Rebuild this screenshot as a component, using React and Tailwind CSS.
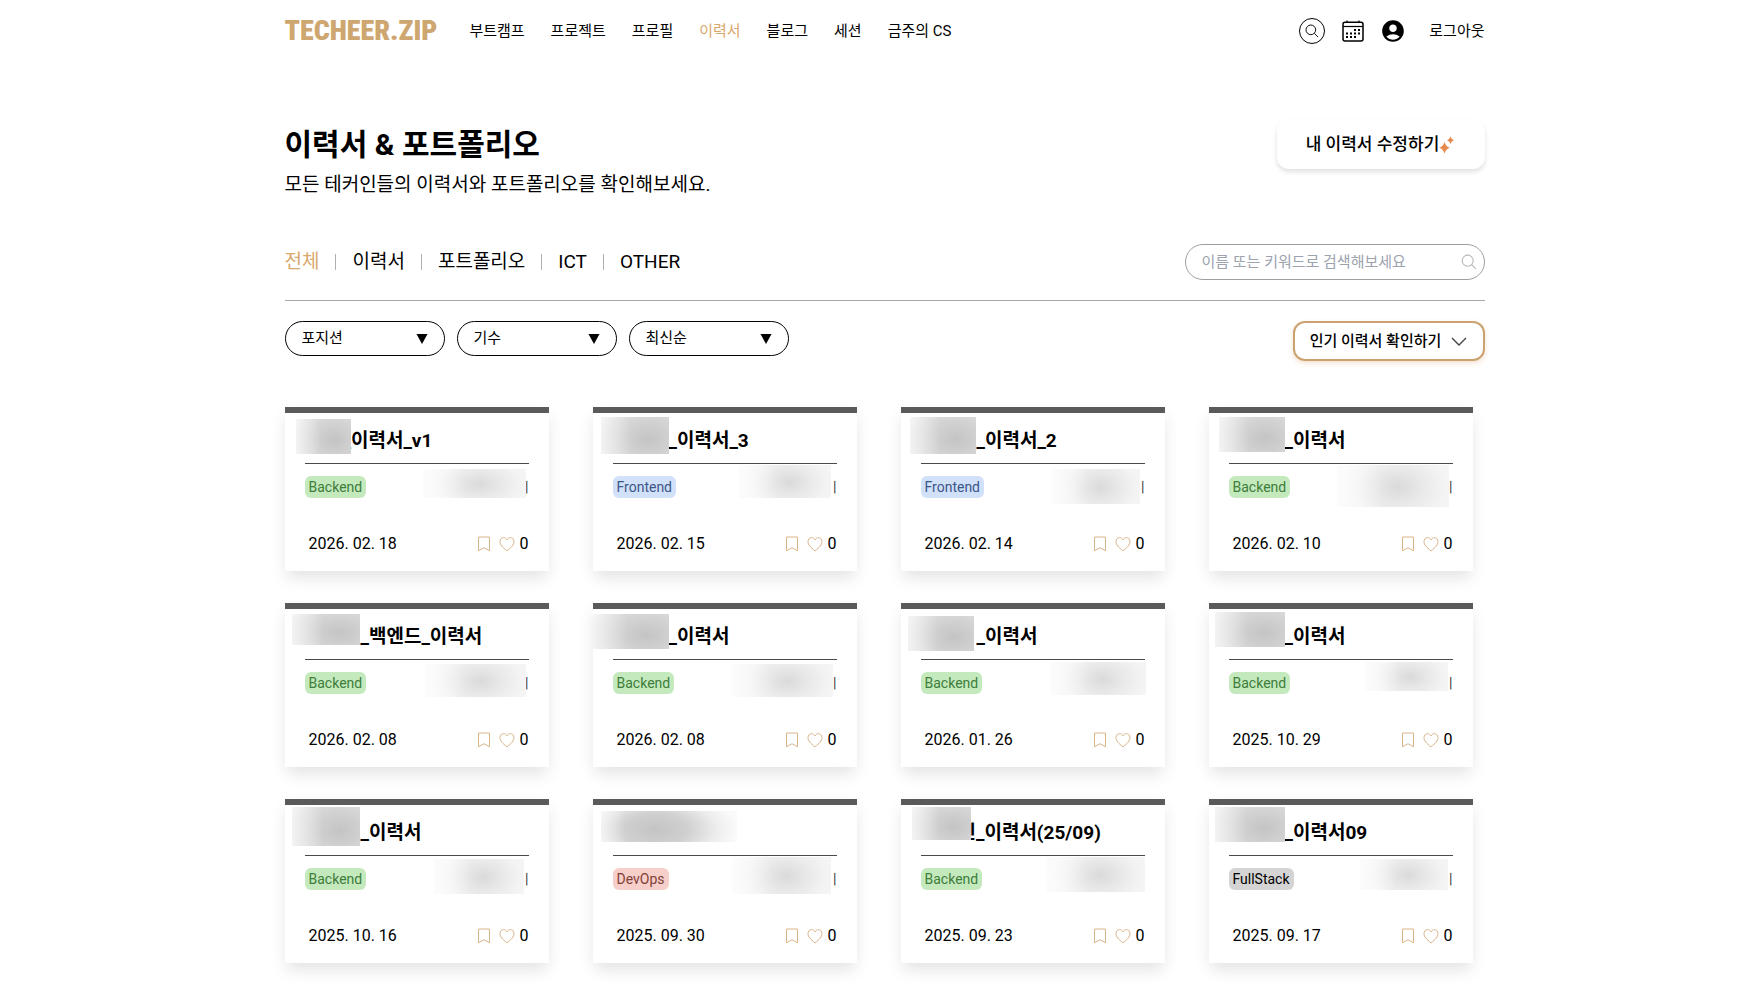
import React, { useState } from 'react';
import { MdAccountCircle } from 'react-icons/md';

const NAV = ['부트캠프', '프로젝트', '프로필', '이력서', '블로그', '세션', '금주의 CS'];
const TABS = ['전체', '이력서', '포트폴리오', 'ICT', 'OTHER'];

const FILTERS = [
    { id: 'position', label: '포지션', options: ['Backend', 'Frontend', 'DevOps', 'FullStack'] },
    { id: 'year', label: '기수', options: ['1기', '2기', '3기'] },
    { id: 'sort', label: '최신순', options: ['조회순', '이름순'] },
];

const TAG_STYLES = {
    Backend: 'bg-[#c3e9bd] text-[#3e7d3a]',
    Frontend: 'bg-[#d0e1f9] text-[#3d5588]',
    DevOps: 'bg-[#f6cfcb] text-[#823f36]',
    FullStack: 'bg-[#d4d4d4] text-black',
};

// titleMask / nameMask: blurred patches that hide personal names
const RESUMES = [
    { id: 1, title: '_이력서_v1', indent: 'pl-[38px]', tag: 'Backend', date: '2026. 02. 18', titleMask: 'left-[11px] top-[6px] w-[55px] h-[35px]', nameMask: 'left-[138px] top-[56px] w-[103px] h-[29px]', bar: true },
    { id: 2, title: '_이력서_3', indent: 'pl-14', tag: 'Frontend', date: '2026. 02. 15', titleMask: 'left-[8px] top-[4px] w-[68px] h-[37px]', nameMask: 'left-[146px] top-[52px] w-[92px] h-[33px]', bar: true },
    { id: 3, title: '_이력서_2', indent: 'pl-14', tag: 'Frontend', date: '2026. 02. 14', titleMask: 'left-[9px] top-[4px] w-[66px] h-[37px]', nameMask: 'left-[151px] top-[56px] w-[88px] h-[35px]', bar: true },
    { id: 4, title: '_이력서', indent: 'pl-14', tag: 'Backend', date: '2026. 02. 10', titleMask: 'left-[10px] top-[4px] w-[66px] h-[35px]', nameMask: 'left-[128px] top-[52px] w-[112px] h-[42px]', bar: true },
    { id: 5, title: '_백엔드_이력서', indent: 'pl-14', tag: 'Backend', date: '2026. 02. 08', titleMask: 'left-[7px] top-[5px] w-[68px] h-[31px]', nameMask: 'left-[140px] top-[55px] w-[101px] h-[33px]', bar: true },
    { id: 6, title: '_이력서', indent: 'pl-14', tag: 'Backend', date: '2026. 02. 08', titleMask: 'left-0 top-[5px] w-[76px] h-[35px]', nameMask: 'left-[139px] top-[55px] w-[101px] h-[33px]', bar: true },
    { id: 7, title: '_이력서', indent: 'pl-14', tag: 'Backend', date: '2026. 01. 26', titleMask: 'left-[7px] top-[7px] w-[66px] h-[35px]', nameMask: 'left-[149px] top-[53px] w-[96px] h-[33px]', bar: false },
    { id: 8, title: '_이력서', indent: 'pl-14', tag: 'Backend', date: '2025. 10. 29', titleMask: 'left-[6px] top-[3px] w-[70px] h-[35px]', nameMask: 'left-[156px] top-[53px] w-[83px] h-[29px]', bar: true },
    { id: 9, title: '_이력서', indent: 'pl-14', tag: 'Backend', date: '2025. 10. 16', titleMask: 'left-[7px] top-[2px] w-[68px] h-[39px]', nameMask: 'left-[149px] top-[54px] w-[90px] h-[35px]', bar: true },
    { id: 10, title: '', indent: 'pl-14', tag: 'DevOps', date: '2025. 09. 30', titleMask: 'left-[8px] top-[6px] w-[136px] h-[31px]', nameMask: 'left-[139px] top-[52px] w-[99px] h-[37px]', bar: true, fullMask: true },
    { id: 11, title: '인_이력서(25/09)', indent: 'pl-[38px]', tag: 'Backend', date: '2025. 09. 23', titleMask: 'left-[11px] top-[2px] w-[59px] h-[33px]', nameMask: 'left-[145px] top-[52px] w-[99px] h-[35px]', bar: false },
    { id: 12, title: '_이력서09', indent: 'pl-14', tag: 'FullStack', date: '2025. 09. 17', titleMask: 'left-[6px] top-[2px] w-[70px] h-[35px]', nameMask: 'left-[151px] top-[54px] w-[88px] h-[31px]', bar: true },
];

function SearchIcon({ className }) {
    return (
        <svg viewBox="0 0 18 18" className={className} fill="none" stroke="currentColor" strokeWidth="1.2">
            <circle cx="7.5" cy="7.5" r="6.2" />
            <path d="M12 12l4.8 4.8" />
        </svg>
    );
}

function CalendarIcon() {
    return (
        <svg viewBox="0 0 22 22" className="h-[22px] w-[22px]" fill="none" stroke="currentColor" strokeWidth="1.5">
            <rect x="1" y="2.2" width="20" height="18.8" rx="2" />
            <path d="M1 6.5h20" strokeWidth="1.2" />
            <path d="M5 .5v2M17 .5v2" strokeWidth="1.2" />
            <g fill="currentColor" stroke="none">
                {[12, 16].map(x => <rect key={x} x={x} y="9" width="2" height="2" />)}
                {[4, 8, 12, 16].map(x => <rect key={x} x={x} y="12.5" width="2" height="2" />)}
                {[4, 8, 12].map(x => <rect key={x} x={x} y="16" width="2" height="2" />)}
            </g>
        </svg>
    );
}

function SparkleIcon() {
    return (
        <svg viewBox="0 0 16 18" className="h-[18px] w-4" fill="#e58a4c">
            <path d="M5.500 6Q6.800 10.700 11 11.800Q6.800 12.900 5.500 17.600Q4.200 12.900 0 11.800Q4.200 10.700 5.500 6Z" />
            <path d="M11.500 .6Q12.400 3.500 15 4.300Q12.400 5.100 11.500 8Q10.600 5.100 8 4.300Q10.600 3.500 11.500 .6Z" />
        </svg>
    );
}

function ResumeCard({ resume }) {
    return (
        <article className="relative h-[164px] border-t-6 border-[#5a5a5a] bg-white px-5 shadow-[0_8px_16px_-2px_rgba(0,0,0,0.12)]">
            <h2 className={`h-[51px] border-b border-[#4a4a4a] pt-[13px] text-[19px] leading-[30px] font-bold whitespace-nowrap ${resume.indent}`}>
                {resume.title}
            </h2>
            <div className="mt-3 flex h-[22px] items-center justify-between">
                <span className={`rounded-md px-1 text-sm leading-[22px] ${TAG_STYLES[resume.tag]}`}>{resume.tag}</span>
                {resume.bar && <span className="text-sm leading-[22px] text-[#333]">|</span>}
            </div>
            <div className="mt-[34px] flex items-center justify-between pl-1 leading-6">
                <time>{resume.date}</time>
                <div className="flex items-center">
                    <button type="button" aria-label="북마크" className="mr-2 text-[#d9b58a]">
                        <svg viewBox="0 0 14 16" className="block h-4 w-[14px]" fill="none" stroke="currentColor">
                            <path d="M1.500 1h11v13.800L7 11.700l-5.500 3.100z" />
                        </svg>
                    </button>
                    <button type="button" aria-label="좋아요" className="mr-[5px] text-[#d9b58a]">
                        <svg viewBox="0 0 16 16" className="block h-4 w-4" fill="none" stroke="currentColor">
                            <path d="M8 14.800C3.500 11.500 1 8.600 1 5.600 1 3.300 2.600 1.600 4.500 1.600 6 1.600 7.300 2.500 8 4c.7-1.500 2-2.400 3.500-2.400C13.400 1.600 15 3.300 15 5.600c0 3-2.500 5.900-7 9.200z" />
                        </svg>
                    </button>
                    <span>0</span>
                </div>
            </div>
            <div
                aria-hidden="true"
                className={`absolute ${resume.titleMask} ${resume.fullMask
                    ? 'bg-[linear-gradient(90deg,rgba(255,255,255,0.5)_0%,rgba(255,255,255,0)_18%),radial-gradient(ellipse_60%_130%_at_40%_60%,#c4c4c4_0%,#d0d0d0_40%,#ededed_75%,#fafafa_100%)]'
                    : 'bg-[linear-gradient(90deg,rgba(255,255,255,0.6)_0%,rgba(255,255,255,0)_45%),radial-gradient(ellipse_90%_120%_at_70%_60%,#c4c4c4_0%,#d2d2d2_40%,#dedede_75%,#ebebeb_100%)]'}`}
            />
            <div
                aria-hidden="true"
                className={`absolute ${resume.nameMask} bg-[linear-gradient(90deg,rgba(255,255,255,0.7)_0%,rgba(255,255,255,0)_40%),radial-gradient(ellipse_50%_100%_at_55%_52%,#dadada_0%,#e8e8e8_40%,#f3f3f3_80%,#f5f5f5_100%)]`}
            />
        </article>
    );
}

export default function App() {
    const [tab, setTab] = useState('전체');
    const [keyword, setKeyword] = useState('');

    return (
        <div className="min-h-screen bg-white pb-5 pl-[15px] font-['Roboto','Noto_Sans_CJK_KR',sans-serif] text-base text-black">
            <div className="mx-auto max-w-[1200px]">
                <header className="flex h-[62px] items-center justify-between text-[15px]">
                    <div className="flex items-center">
                        <a href="#" className="mr-8 font-['Roboto_Condensed','Roboto',sans-serif] text-[28px] leading-10 font-black text-[#cea670]">TECHEER.ZIP</a>
                        <nav className="flex gap-[26px]">
                            {NAV.map(item => (
                                <a key={item} href="#" className={item === '이력서' ? 'text-[#d9a86c]' : ''}>{item}</a>
                            ))}
                        </nav>
                    </div>
                    <div className="flex items-center">
                        <button type="button" aria-label="검색" className="mr-[17px] flex h-[26px] w-[26px] items-center justify-center rounded-full border border-black">
                            <SearchIcon className="h-[14px] w-[14px]" />
                        </button>
                        <button type="button" aria-label="캘린더" className="mr-4"><CalendarIcon /></button>
                        <button type="button" aria-label="내 프로필" className="mr-[23px]"><MdAccountCircle className="h-[26px] w-[26px]" /></button>
                        <button type="button">로그아웃</button>
                    </div>
                </header>

                <main>
                    <section className="mt-[58px] flex items-start justify-between">
                        <div className="pt-px">
                            <h1 className="text-[30px] leading-[48px] font-bold">이력서 &amp; 포트폴리오</h1>
                            <p className="text-[19px] leading-8">모든 테커인들의 이력서와 포트폴리오를 확인해보세요.</p>
                        </div>
                        <button type="button" className="flex h-[49px] w-52 items-center justify-center rounded-xl text-[17px] font-medium shadow-[0_3px_5px_rgba(0,0,0,0.12)]">
                            내 이력서 수정하기
                            <SparkleIcon />
                        </button>
                    </section>

                    <section className="mt-[43px] flex h-[57px] items-start justify-between border-b border-[#a8a8a8]">
                        <div className="flex h-9 items-center text-[19px]">
                            {TABS.map((item, idx) => (
                                <React.Fragment key={item}>
                                    {idx > 0 && <span className="mx-4 h-4 w-px bg-[#b0b0b0]" />}
                                    <button type="button" onClick={() => setTab(item)} className={tab === item ? 'text-[#d9a86c]' : ''}>{item}</button>
                                </React.Fragment>
                            ))}
                        </div>
                        <div className="flex h-9 w-[300px] items-center rounded-full border border-[#9e9e9e] pr-[7px] pl-4">
                            <input
                                type="text"
                                aria-label="이력서 검색"
                                value={keyword}
                                onChange={e => setKeyword(e.target.value)}
                                placeholder="이름 또는 키워드로 검색해보세요"
                                className="min-w-0 flex-1 text-[15px] outline-none placeholder:text-[#9ca3af]"
                            />
                            <SearchIcon className="h-4 w-4 text-[#b8b8b8]" />
                        </div>
                    </section>

                    <section className="mt-5 flex items-start justify-between text-[15px]">
                        <div className="flex gap-3">
                            {FILTERS.map(f => (
                                <div key={f.id} className="relative">
                                    <select aria-label={f.label} className="h-[35px] w-40 appearance-none rounded-full border border-black bg-white pl-4">
                                        <option>{f.label}</option>
                                        {f.options.map(o => <option key={o}>{o}</option>)}
                                    </select>
                                    <svg viewBox="0 0 12 10" className="pointer-events-none absolute top-[13px] right-[17px] h-[10px] w-3">
                                        <path d="M.5 0h11L6 10z" />
                                    </svg>
                                </div>
                            ))}
                        </div>
                        <button type="button" className="flex h-10 w-48 items-center justify-center gap-[10px] rounded-xl border-2 border-[#c9a26f] font-medium shadow-[0_2px_5px_rgba(217,150,90,0.3)]">
                            인기 이력서 확인하기
                            <svg viewBox="0 0 16 9" className="h-[9px] w-4" fill="none" stroke="#444" strokeWidth="1.4">
                                <path d="M1 1l7 7 7-7" />
                            </svg>
                        </button>
                    </section>

                    <section className="mt-[46px] grid max-w-[1188px] grid-cols-4 gap-x-11 gap-y-8">
                        {RESUMES.map(r => <ResumeCard key={r.id} resume={r} />)}
                    </section>
                </main>
            </div>
        </div>
    );
}
